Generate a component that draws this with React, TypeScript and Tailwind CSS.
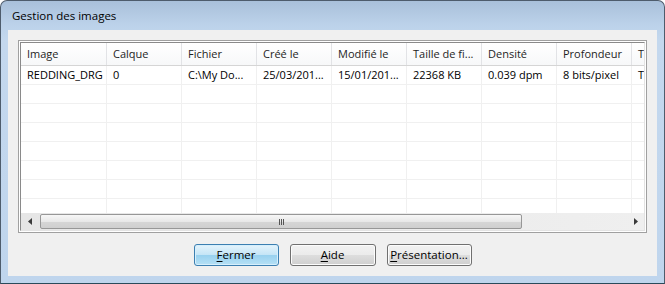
const cols = [
	{ h: "Image", v: "REDDING_DRG", w: "w-[86px]" },
	{ h: "Calque", v: "0", w: "w-[75px]" },
	{ h: "Fichier", v: "C:\\My Do...", w: "w-[75px]" },
	{ h: "Créé le", v: "25/03/201...", w: "w-[75px]" },
	{ h: "Modifié le", v: "15/01/201...", w: "w-[75px]" },
	{ h: "Taille de fi...", v: "22368 KB", w: "w-[75px]" },
	{ h: "Densité", v: "0.039 dpm", w: "w-[75px]" },
	{ h: "Profondeur", v: "8 bits/pixel", w: "w-[75px]" },
	{ h: "T", v: "T", w: "w-[75px]" },
];

const emptyRows = [1, 2, 3, 4, 5, 6, 7];

function Btn({ label, def, w }: { label: string; def?: boolean; w: string }) {
	const first = label.charAt(0);
	const rest = label.slice(1);
	return (
		<div
			className={
				def
					? `h-[22px] ${w} rounded-[3px] border border-[#3c7fb1] bg-[linear-gradient(#e5f4fc_0%,#c4e5f6_50%,#98d1ef_51%,#b6e0f5_100%)] shadow-[inset_0_0_0_1px_#d6effc] flex items-center justify-center text-[11.5px] text-black`
					: `h-[22px] ${w} rounded-[3px] border border-[#707070] bg-[linear-gradient(#f2f2f2_0%,#ebebeb_50%,#dddddd_51%,#cfcfcf_100%)] shadow-[inset_0_0_0_1px_#fcfcfc] flex items-center justify-center text-[11.5px] text-black`
			}
		>
			<span>
				<span className="underline underline-offset-[2px]">{first}</span>
				{rest}
			</span>
		</div>
	);
}

export default function App() {
	return (
		<div className="w-[665px] h-[284px] bg-white font-['Segoe_UI','Open_Sans',sans-serif]">
			<div className="w-full h-full flex flex-col rounded-t-[7px] border border-[#4e5c6c] border-b-[#2a4a5a] bg-[linear-gradient(#a9c0da_0px,#bcd2ea_24px,#c4d8ee_40px,#bfd5ed_100%)]">
				<div className="h-[29px] shrink-0 flex items-center pl-[11px] text-[11.5px] text-black">
					Gestion des images
				</div>
				<div className="flex-1 mx-[7px] mb-[7px] bg-[#f0f0f0] flex flex-col px-[10px] pt-[10px]">
					{/* list view */}
					<div className="h-[193px] border border-[#a0a0a0] p-px bg-white">
						<div className="h-full flex flex-col border border-t-[#8a8a8a] border-l-[#8a8a8a] border-r-[#e3e3e3] border-b-[#e3e3e3] bg-white overflow-hidden">
							<div className="flex-1 overflow-hidden">
								<div className="flex h-[23px] border-b border-[#d5d5d5] bg-[linear-gradient(#ffffff,#f7f8f9)] text-[11px] text-[#1e1e1e]">
									{cols.map((c) => (
										<div key={c.h} className={`${c.w} shrink-0 border-r border-[#e2e3e6] pl-[6px] flex items-center whitespace-nowrap overflow-hidden`}>
											{c.h}
										</div>
									))}
								</div>
								<div className="flex h-[19px] border-b border-[#f0f0f0] text-[11px] text-black">
									{cols.map((c) => (
										<div key={c.h} className={`${c.w} shrink-0 border-r border-[#f0f0f0] pl-[6px] flex items-center whitespace-nowrap overflow-hidden`}>
											{c.v}
										</div>
									))}
								</div>
								{emptyRows.map((r) => (
									<div key={r} className="flex h-[19px] border-b border-[#f0f0f0]">
										{cols.map((c) => (
											<div key={c.h} className={`${c.w} shrink-0 border-r border-[#f0f0f0]`} />
										))}
									</div>
								))}
							</div>
							{/* horizontal scrollbar */}
							<div className="h-[17px] shrink-0 flex items-center bg-[linear-gradient(90deg,#e6e6e6,#efefef)]">
								<div className="w-[17px] h-full flex items-center justify-center">
									<svg width="4" height="7" viewBox="0 0 4 7">
										<path d="M4 0 L0 3.5 L4 7 Z" fill="#3a3a3a" />
									</svg>
								</div>
								<div className="flex-1 h-full flex items-center pl-[2px]">
									<div className="w-[482px] h-[15px] rounded-[2px] border border-[#979797] bg-[linear-gradient(#f7f7f7,#e8e8e8_50%,#d6d6d6_51%,#cfcfcf)] flex items-center justify-center">
										<div className="flex gap-[1px]">
											<div className="w-px h-[6px] bg-[#555]" />
											<div className="w-px h-[6px] bg-[#555]" />
											<div className="w-px h-[6px] bg-[#555]" />
										</div>
									</div>
								</div>
								<div className="w-[17px] h-full flex items-center justify-center">
									<svg width="4" height="7" viewBox="0 0 4 7">
										<path d="M0 0 L4 3.5 L0 7 Z" fill="#3a3a3a" />
									</svg>
								</div>
							</div>
						</div>
					</div>
					{/* buttons */}
					<div className="mt-[11px] flex justify-center gap-[11px]">
						<Btn label="Fermer" def w="w-[85px]" />
						<Btn label="Aide" w="w-[86px]" />
						<Btn label="Présentation..." w="w-[85px]" />
					</div>
				</div>
			</div>
		</div>
	);
}
